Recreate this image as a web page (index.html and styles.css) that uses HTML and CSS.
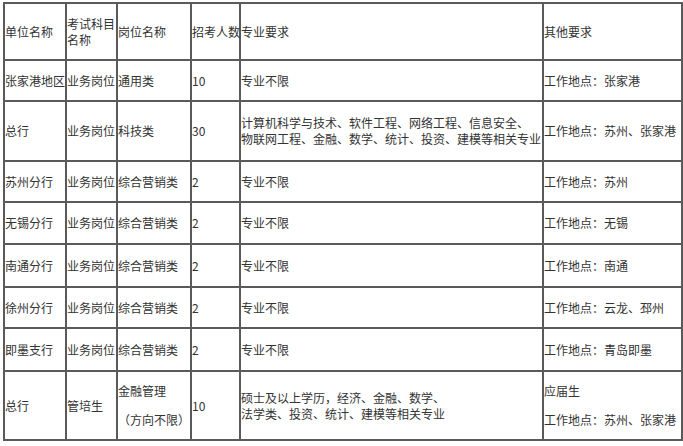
FILE: index.html
```html
<!DOCTYPE html>
<html>
<head>
<meta charset="utf-8">
<link rel="stylesheet" href="styles.css">
</head>
<body>
<div class="wrap">
<table class="jobs">
<colgroup>
<col class="c1"><col class="c2"><col class="c3"><col class="c4"><col class="c5"><col class="c6">
</colgroup>
<tr class="r0"><td>单位名称</td><td>考试科目<br>名称</td><td>岗位名称</td><td>招考人数</td><td>专业要求</td><td>其他要求</td></tr>
<tr class="r1"><td>张家港地区</td><td>业务岗位</td><td>通用类</td><td>10</td><td>专业不限</td><td>工作地点：张家港</td></tr>
<tr class="r2"><td>总行</td><td>业务岗位</td><td>科技类</td><td>30</td><td>计算机科学与技术、软件工程、网络工程、信息安全、<br>物联网工程、金融、数学、统计、投资、建模等相关专业</td><td>工作地点：苏州、张家港</td></tr>
<tr class="r3"><td>苏州分行</td><td>业务岗位</td><td>综合营销类</td><td>2</td><td>专业不限</td><td>工作地点：苏州</td></tr>
<tr class="r4"><td>无锡分行</td><td>业务岗位</td><td>综合营销类</td><td>2</td><td>专业不限</td><td>工作地点：无锡</td></tr>
<tr class="r5"><td>南通分行</td><td>业务岗位</td><td>综合营销类</td><td>2</td><td>专业不限</td><td>工作地点：南通</td></tr>
<tr class="r6"><td>徐州分行</td><td>业务岗位</td><td>综合营销类</td><td>2</td><td>专业不限</td><td>工作地点：云龙、邳州</td></tr>
<tr class="r7"><td>即墨支行</td><td>业务岗位</td><td>综合营销类</td><td>2</td><td>专业不限</td><td>工作地点：青岛即墨</td></tr>
<tr class="r8"><td>总行</td><td>管培生</td><td><div class="para">金融管理</div><div class="para">（方向不限）</div></td><td>10</td><td>硕士及以上学历，经济、金融、数学、<br>法学类、投资、统计、建模等相关专业</td><td><div class="para">应届生</div><div class="para">工作地点：苏州、张家港</div></td></tr>
</table>
</div>
</body>
</html>
```
FILE: styles.css
```css
html, body {
  margin: 0;
  padding: 0;
  background: #ffffff;
}
.wrap {
  padding: 2px 0 0 3px;
}
.jobs {
  border-collapse: collapse;
  table-layout: fixed;
  width: 678px;
  font-family: "Noto Sans CJK SC", "Noto Sans", sans-serif;
  font-size: 12px;
  line-height: 16px;
  color: #333333;
}
.jobs td {
  border: 2px solid #5a5a5a;
  padding: 0;
  vertical-align: middle;
  text-align: left;
  white-space: nowrap;
  overflow: visible;
}
.c1 { width: 62px; }
.c2 { width: 51px; }
.c3 { width: 74px; }
.c4 { width: 49px; }
.c5 { width: 303px; }
.c6 { width: 139px; }
.r0 td { height: 55px; }
.r1 td { height: 39px; }
.r2 td { height: 58px; }
.r3 td { height: 39px; }
.r4 td { height: 40px; }
.r5 td { height: 41px; }
.r6 td { height: 39px; }
.r7 td { height: 41px; }
.r8 td { height: 67px; }
.para {
  margin: 6px 0;
}
.para + .para {
  margin-top: 13px;
}
```
